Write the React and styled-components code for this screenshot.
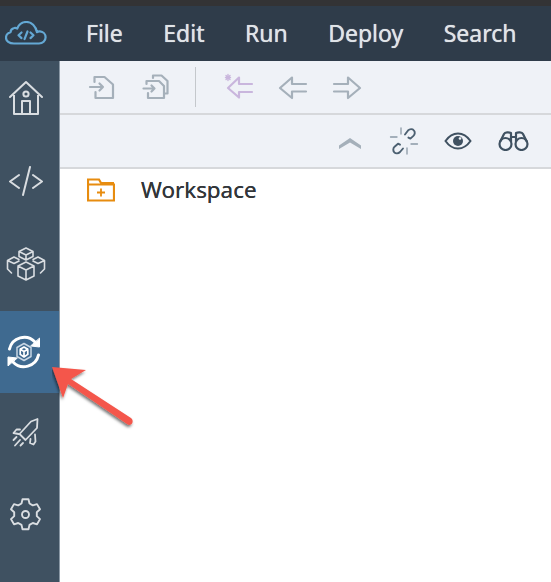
import React from "react";
import styled, { createGlobalStyle } from "styled-components";

const GlobalStyle = createGlobalStyle`
  html, body { margin: 0; padding: 0; background: #fff; }
  body { font-family: "Noto Sans", "Liberation Sans", sans-serif; }
`;

function Line({ color = "#a5b0ba", width = 2.2, size = 30, children }) {
  return (
    <svg width={size} height={size} viewBox="0 0 30 30" fill="none" stroke={color} strokeWidth={width} strokeLinecap="round" strokeLinejoin="round">
      {children}
    </svg>
  );
}

const sideColor = "#d9dde1";

const menu = ["File", "Edit", "Run", "Deploy", "Search"];

function App() {
  return (
    <Page>
      <GlobalStyle />
      <TopStrip />
      <MenuBar>
        <Logo>
          <svg width="42" height="24" viewBox="0 0 42 24" fill="none" stroke="#64a8d4" strokeWidth="2.2" strokeLinecap="round" strokeLinejoin="round">
            <path d="M9 22.5h25c3.600 0 6.600-2.600 6.600-6.200 0-3.300-2.500-5.800-5.600-6-1.200-.1-2.300.3-3 .9C30.700 5 26.500 1 21.500 1c-4.300 0-7.800 2.700-9.300 6.500-.9-.6-2-.8-3-.5C7 7.500 5.600 9.200 5.500 11.300 2.900 12 1 14.200 1 16.800c0 3.200 3.200 5.700 8 5.700z" />
            <path d="M16.500 11.500l-3 2.800 3 2.800M25.500 11.500l3 2.800-3 2.800M22.500 10.500l-3 7.600" />
          </svg>
        </Logo>
        <MenuList>
          {menu.map((m) => (
            <MenuItem key={m}>{m}</MenuItem>
          ))}
        </MenuList>
      </MenuBar>

      <Body>
        <Sidebar>
          <SideItem $h={74}>
            <svg width="34" height="36" viewBox="0 0 34 36" fill="none" stroke={sideColor} strokeWidth="2" strokeLinejoin="round">
              <path d="M1 17L17 2l16 15" strokeLinecap="round" />
              <path d="M5 15v19h24V15" />
              <circle cx="17" cy="14" r="2.600" />
              <path d="M13 34V21h8v13" />
            </svg>
          </SideItem>
          <SideItem $h={92}>
            <svg width="34" height="30" viewBox="0 0 34 30" fill="none" stroke={sideColor} strokeWidth="2" strokeLinecap="round" strokeLinejoin="round">
              <path d="M10 9l-9 6.500 9 6.500M24 9l9 6.500-9 6.500M21 1l-7 28" />
            </svg>
          </SideItem>
          <SideItem $h={84} $pb={10}>
            <svg width="40" height="34" viewBox="0 0 40 34" fill="none" stroke={sideColor} strokeWidth="1.600" strokeLinejoin="round" strokeLinecap="round">
              <path d="M20 1l7 3.500v5L20 13l-7-3.500v-5zM13 4.500l7 3.500 7-3.500M20 8v5" />
              <path d="M8 10l5 2.500M8 10l-6.500 3.500 6.500 3 5-2.500M1.500 13.500V22l4 4M32 10l-5 2.500M32 10l6.500 3.500-6.500 3-5-2.500M38.500 13.500V22l-4 4" />
              <path d="M20 15l8 4v10l-8 4-8-4V19zM12 19l8 4 8-4M20 23v10" />
            </svg>
          </SideItem>
          <SideItem $h={82} $active $shift={4}>
            <svg width="36" height="36" viewBox="0 0 36 36" fill="none" stroke="#fff" strokeWidth="3" strokeLinejoin="round" strokeLinecap="round">
              <path d="M3.500 15A15 15 0 0 1 29 8M32.500 21A15 15 0 0 1 7 28" />
              <path d="M33.500 4.500v8.500l-8.500-1z" fill="#fff" strokeWidth="1" />
              <path d="M2 31.500V23l9 1z" fill="#fff" strokeWidth="1" />
              <path d="M18 9.500l7 4v9l-7 4-7-4v-9z" stroke="#c7d6e4" strokeWidth="1.500" />
              <path d="M18 13l3.800 2.200v5.200L18 23l-3.800-2.600v-5.200zM14.200 15.200l3.800 2.200 3.800-2.200M18 17.400V23" stroke="#fff" strokeWidth="1.700" />
            </svg>
          </SideItem>
          <SideItem $h={78}>
            <svg width="27" height="29" viewBox="0 0 27 29" fill="none" stroke={sideColor} strokeWidth="1.800" strokeLinejoin="round" strokeLinecap="round">
              <path d="M25.500 1l-.5 9-11.500 12-6-6L19 3.500zM8 11.500H4.500L1.500 15l5 1M18.500 21l-.5 4 3.500 1.500 2-3-.5-7" />
              <path d="M4.500 19l-3 3M8 22l-5 5.500M11 25l-2.500 2.500" />
            </svg>
          </SideItem>
          <SideItem $h={86}>
            <svg width="33" height="33" viewBox="0 0 33 33" fill="none" stroke={sideColor} strokeWidth="1.900" strokeLinejoin="round">
              <path d="M13.500 1.200h6l1 4.300 3.300 1.900 4.200-1.300 3 5.200-3.200 3v3.800l3.200 3-3 5.200-4.200-1.300-3.300 1.900-1 4.300h-6l-1-4.300-3.300-1.900-4.200 1.300-3-5.200 3.200-3v-3.800l-3.200-3 3-5.200 4.200 1.300 3.300-1.900z" />
              <circle cx="16.500" cy="16.500" r="3.500" />
            </svg>
          </SideItem>
        </Sidebar>

        <Main>
          <Toolbar $h={54} $pad={88}>
            <ToolIcon $w={30} $mr={24}>
              <Line>
                <path d="M6.500 10V5h10l8.500 7.500V26H7.500v-6" />
                <path d="M2 15h13M11.500 11.500L15 15l-3.500 3.500" />
              </Line>
            </ToolIcon>
            <ToolIcon $w={30} $mr={23}>
              <Line>
                <path d="M11 6V3.500h8.500l6 5.500v12.500h-2.500" />
                <path d="M4.500 12V9h12.500l5 5v12H6v-5" />
                <path d="M1.500 16.500h11M9.500 13.500l3 3-3 3" />
              </Line>
            </ToolIcon>
            <Divider />
            <ToolIcon $w={30} $mr={24}>
              <Line color="#c9b6dd">
                <path d="M28 12H15V5.500L4 16l11 9.500V20h13" />
                <path d="M2 3.500l4 4M6 3.500l-4 4M4 2.500v6M1.500 5.500h5" strokeWidth="1.400" />
              </Line>
            </ToolIcon>
            <ToolIcon $w={30} $mr={24}>
              <Line>
                <path d="M28 12H14V5.500L2 16l12 10v-6.500h14" />
              </Line>
            </ToolIcon>
            <ToolIcon $w={30}>
              <Line>
                <path d="M2 12h14V5.500L28 16 16 26v-6.500H2" />
              </Line>
            </ToolIcon>
          </Toolbar>

          <Toolbar $h={54} $end>
            <ToolIcon $w={26} $mr={26} $nudge={4}>
              <svg width="22" height="11" viewBox="0 0 22 11" fill="#a5b0ba">
                <path d="M0 7.500L11 0l11 7.500V11L11 4.500 0 11z" />
              </svg>
            </ToolIcon>
            <ToolIcon $w={30} $mr={24}>
              <Line color="#4c6071" width={1.900}>
                <path d="M16 8.500l3-4c1.800-1.700 4.400-1.800 5.800-.2 1.500 1.500 1.200 4-.4 5.600l-3 2.700-2-1" />
                <path d="M14 22.500l-3 3.500c-1.700 1.700-4.300 1.800-5.700.3-1.500-1.500-1.300-4 .3-5.600l3.400-3 2 1" />
                <path d="M12 2v6M1.500 11h6.500M18 22v6M22 18h6.500" stroke="#8b99a6" strokeWidth="1.300" />
              </Line>
            </ToolIcon>
            <ToolIcon $w={30} $mr={24}>
              <svg width="28" height="18" viewBox="0 0 28 18" fill="none" stroke="#3f5161" strokeWidth="2">
                <path d="M1.500 9C5 4 9 1.500 14 1.500S23 4 26.500 9C23 14 19 16.500 14 16.500S5 14 1.500 9z" />
                <circle cx="14" cy="9" r="5" fill="#3f5161" stroke="none" />
                <circle cx="16" cy="6.500" r="1.300" fill="#eff2f7" stroke="none" />
              </svg>
            </ToolIcon>
            <ToolIcon $w={32} $mr={22}>
              <svg width="31" height="20" viewBox="0 0 31 20" fill="none" stroke="#3f5161" strokeWidth="2.200" strokeLinejoin="round">
                <circle cx="7.500" cy="13" r="6" />
                <circle cx="23.500" cy="13" r="6" />
                <path d="M2 11L6 3c1-2 5-2 7-1v9M29 11l-4-8c-1-2-5-2-7-1v9M13 6h5" />
              </svg>
            </ToolIcon>
          </Toolbar>

          <TreeRow>
            <svg width="28" height="24" viewBox="0 0 28 24" fill="none" stroke="#e78c0f" strokeWidth="2.200">
              <path d="M1 6V1.500h11l2 3.500h13" />
              <path d="M1 6.500h26v16H1z" />
              <path d="M10 14.500h8M14 10.500v8" strokeWidth="1.800" />
            </svg>
            <TreeLabel>Workspace</TreeLabel>
          </TreeRow>
        </Main>
      </Body>

      <Pointer>
        <svg width="90" height="70" viewBox="0 0 90 70">
          <defs>
            <filter id="arrowShadow" x="-20%" y="-20%" width="150%" height="150%">
              <feDropShadow dx="-1" dy="2" stdDeviation="1.800" floodColor="#000" floodOpacity="0.55" />
            </filter>
          </defs>
          <path
            d="M0 1L34 4 19 13 79 52c2 1.500 2 4 1 5.500s-3 2-5 .5L16 18 11 32z"
            fill="#f4574b"
            filter="url(#arrowShadow)"
          />
        </svg>
      </Pointer>
    </Page>
  );
}

export default App;

const Page = styled.div`
  position: relative;
  width: 551px;
  height: 582px;
  overflow: hidden;
  display: flex;
  flex-direction: column;
`;

const TopStrip = styled.div`
  height: 6px;
  background: #333335;
`;

const MenuBar = styled.div`
  height: 55px;
  background: #2f3c4a;
  display: flex;
  align-items: center;
`;

const Logo = styled.div`
  width: 60px;
  padding-left: 5px;
  padding-bottom: 2px;
  box-sizing: border-box;
  display: flex;
`;

const MenuList = styled.div`
  display: flex;
  gap: 40.5px;
  padding-left: 26px;
`;

const MenuItem = styled.div`
  color: #e0e4e8;
  font-size: 23px;
  line-height: 30px;
  padding-bottom: 1px;
  text-shadow: 0 0 0.7px #e0e4e8;
`;

const Body = styled.div`
  flex: 1;
  display: flex;
  min-height: 0;
`;

const Sidebar = styled.div`
  width: 60px;
  background: #3f5161;
  border-right: 1px solid #8a98a5;
  box-sizing: border-box;
  display: flex;
  flex-direction: column;
`;

const SideItem = styled.div`
  height: ${(p) => p.$h}px;
  padding-bottom: ${(p) => p.$pb || 0}px;
  padding-right: ${(p) => 8 + (p.$shift || 0)}px;
  box-sizing: border-box;
  display: flex;
  align-items: center;
  justify-content: center;
  background: ${(p) => (p.$active ? "#3f6a90" : "transparent")};
`;

const Main = styled.div`
  flex: 1;
  display: flex;
  flex-direction: column;
  background: #fff;
`;

const Toolbar = styled.div`
  height: ${(p) => p.$h}px;
  box-sizing: border-box;
  background: #eff2f7;
  border-bottom: 2px solid #d6d8db;
  display: flex;
  align-items: center;
  justify-content: ${(p) => (p.$end ? "flex-end" : "flex-start")};
  padding-left: ${(p) => (p.$pad ? p.$pad - 60 : 0)}px;
`;

const ToolIcon = styled.div`
  width: ${(p) => p.$w}px;
  margin-right: ${(p) => p.$mr || 0}px;
  padding-top: ${(p) => p.$nudge || 0}px;
  display: flex;
  justify-content: center;
`;

const Divider = styled.div`
  width: 1px;
  height: 40px;
  background: #c4c8cc;
  margin-right: 28px;
`;

const TreeRow = styled.div`
  display: flex;
  align-items: center;
  gap: 26px;
  padding: 6px 0 0 27px;
`;

const TreeLabel = styled.div`
  color: #32363a;
  font-size: 22.4px;
  line-height: 30px;
  text-shadow: 0 0 0.3px #32363a;
`;

const Pointer = styled.div`
  position: absolute;
  left: 52px;
  top: 366px;
`;
